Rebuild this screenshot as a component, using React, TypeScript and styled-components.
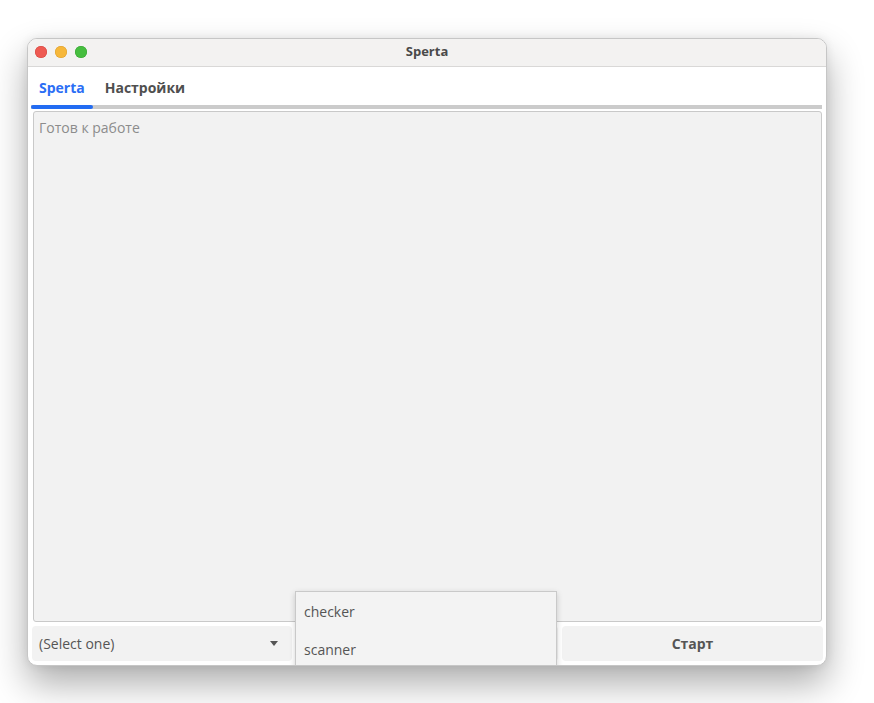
import { createGlobalStyle } from "styled-components";
import styled from "styled-components";

const GlobalStyle = createGlobalStyle`
  html, body {
    margin: 0;
    padding: 0;
    background: #ffffff;
  }
  body {
    font-family: "Open Sans", "Noto Sans", sans-serif;
  }
`;

const Page = styled.div`
  width: 874px;
  height: 703px;
  padding: 38px 0 0 27px;
  box-sizing: border-box;
`;

const Window = styled.div`
  width: 800px;
  height: 628px;
  box-sizing: border-box;
  border: 1px solid #c6c6c6;
  border-radius: 10px;
  background: #ffffff;
  overflow: hidden;
  display: flex;
  flex-direction: column;
  box-shadow: 0 18px 36px rgba(0, 0, 0, 0.32), 0 0 10px rgba(0, 0, 0, 0.08);
`;

const TitleBar = styled.div`
  position: relative;
  height: 28px;
  flex-shrink: 0;
  background: #f3f2f1;
  border-bottom: 1px solid #d9d8d7;
  display: flex;
  align-items: center;
  justify-content: center;
  padding-bottom: 3px;
  box-sizing: border-box;
`;

const Lights = styled.div`
  position: absolute;
  left: 7px;
  top: 7px;
  display: flex;
  gap: 8px;
`;

const Light = styled.span<{ $color: string; $edge: string }>`
  width: 12px;
  height: 12px;
  border-radius: 50%;
  background: ${({ $color }) => $color};
  box-shadow: inset 0 0 0 0.5px ${({ $edge }) => $edge};
`;

const Title = styled.div`
  font-family: "Open Sans", sans-serif;
  font-size: 13px;
  font-weight: 700;
  color: #4a4a4a;
`;

const Body = styled.div`
  flex: 1;
  display: flex;
  flex-direction: column;
  padding: 0 4px 4px 3px;
  min-height: 0;
`;

const Tabs = styled.div`
  display: flex;
  gap: 4px;
  height: 38px;
  align-items: stretch;
`;

const Tab = styled.div<{ $active?: boolean }>`
  padding: 0 8px;
  display: flex;
  align-items: center;
  padding-top: 3px;
  font-size: 14px;
  font-weight: 700;
  color: ${({ $active }) => ($active ? "#2b6ef5" : "#4f4f4f")};
`;

const TabLine = styled.div`
  height: 4px;
  background: #cbcbcb;
  display: flex;
`;

const TabIndicator = styled.div`
  width: 62px;
  height: 4px;
  background: #236cf2;
  border-radius: 2px;
`;

const LogArea = styled.div`
  margin: 2px 0 0 2px;
  flex: 1;
  background: #f2f2f2;
  border: 1px solid #c9c9c9;
  border-radius: 3px;
  padding: 6px 5px;
  font-size: 14px;
  color: #8c8c8c;
`;

const Controls = styled.div`
  margin-top: 4px;
  margin-left: 1px;
  height: 35px;
  display: grid;
  grid-template-columns: 260px 262px 261px;
  gap: 4px;
`;

const Select = styled.div`
  background: #f2f2f2;
  border-radius: 4px;
  display: flex;
  align-items: center;
  justify-content: space-between;
  padding: 0 14px 0 7px;
  font-size: 14px;
  color: #555555;
`;

const Arrow = styled.span`
  width: 0;
  height: 0;
  border-left: 4.5px solid transparent;
  border-right: 4.5px solid transparent;
  border-top: 5px solid #555555;
`;

const ComboSlot = styled.div`
  position: relative;
  background: #f2f2f2;
  border-radius: 4px;
`;

const Popup = styled.div`
  position: absolute;
  left: -1px;
  top: -35px;
  width: 262px;
  height: 120px;
  box-sizing: border-box;
  background: #f3f3f3;
  border: 1px solid #c9c9c9;
  box-shadow: 0 2px 6px rgba(0, 0, 0, 0.18);
`;

const Option = styled.div`
  height: 38px;
  display: flex;
  align-items: center;
  padding-left: 8px;
  font-size: 14px;
  color: #555555;
`;

const StartButton = styled.div`
  background: #f2f2f2;
  border-radius: 4px;
  display: flex;
  align-items: center;
  justify-content: center;
  font-size: 14px;
  font-weight: 700;
  color: #555555;
`;

export default function App() {
  return (
    <>
      <GlobalStyle />
      <Page>
        <Window>
          <TitleBar>
            <Lights>
              <Light $color="#ee5a52" $edge="#d4443d" />
              <Light $color="#f6b73a" $edge="#dc9d2a" />
              <Light $color="#46be3f" $edge="#35a22f" />
            </Lights>
            <Title>Sperta</Title>
          </TitleBar>
          <Body>
            <Tabs>
              <Tab $active>Sperta</Tab>
              <Tab>Настройки</Tab>
            </Tabs>
            <TabLine>
              <TabIndicator />
            </TabLine>
            <LogArea>Готов к работе</LogArea>
            <Controls>
              <Select>
                (Select one)
                <Arrow />
              </Select>
              <ComboSlot>
                <Popup>
                  <Option>checker</Option>
                  <Option>scanner</Option>
                </Popup>
              </ComboSlot>
              <StartButton>Старт</StartButton>
            </Controls>
          </Body>
        </Window>
      </Page>
    </>
  );
}
